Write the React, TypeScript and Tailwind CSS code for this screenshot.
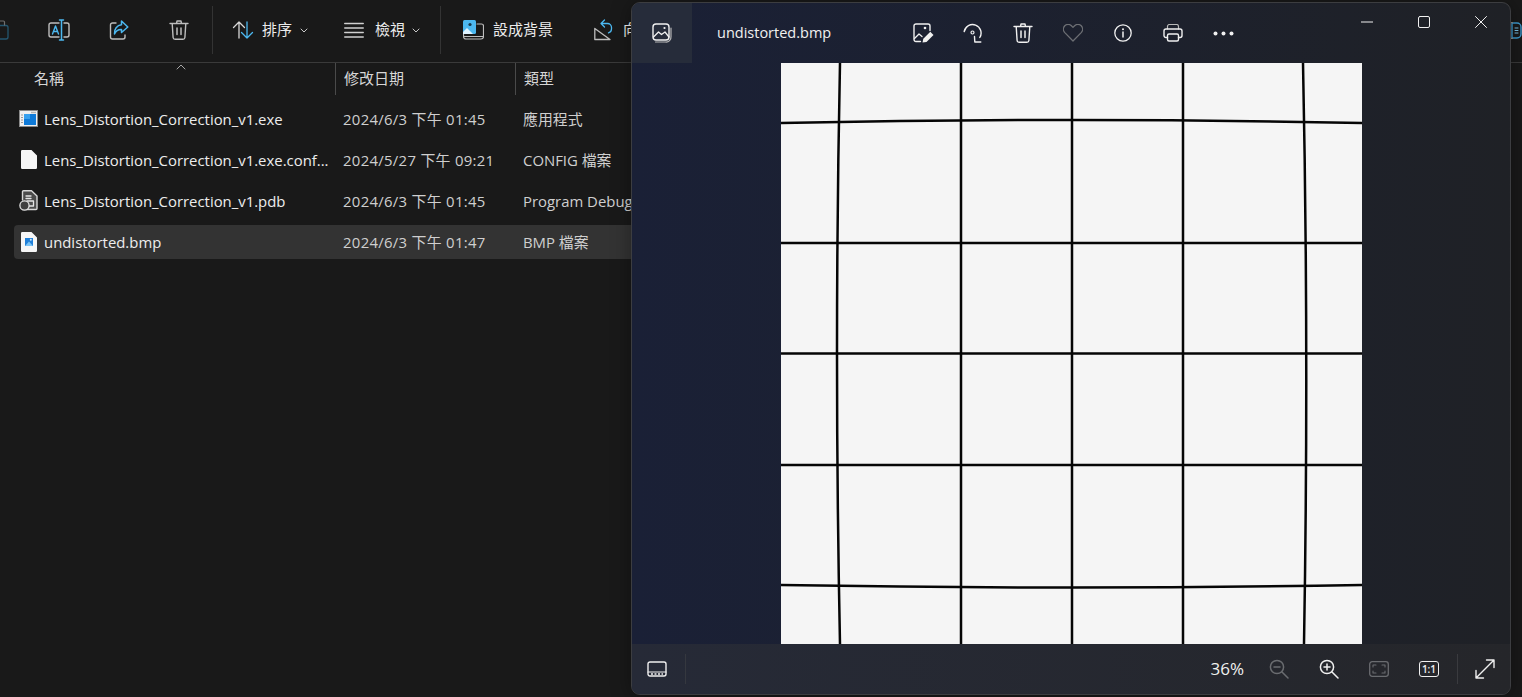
import React from "react";

const UI = "font-['Open_Sans','Noto_Sans_CJK_TC',sans-serif]";

function Svg({ w = 20, h = 20, vb = "0 0 20 20", className = "", children }: { w?: number; h?: number; vb?: string; className?: string; children: React.ReactNode }) {
  return (
    <svg width={w} height={h} viewBox={vb} fill="none" strokeLinecap="round" strokeLinejoin="round" className={"shrink-0 " + className}>
      {children}
    </svg>
  );
}

const G = "#bdbdbd";
const B = "#4cb8f0";

const Rename = () => (
  <Svg w={22} h={22} vb="0 0 22 22">
    <path d="M11 4H3a2 2 0 0 0-2 2v10a2 2 0 0 0 2 2h8M16 4h3a2 2 0 0 1 2 2v10a2 2 0 0 1-2 2h-3" stroke={G} strokeWidth="1.4" />
    <path d="M13.5 1.500v19M11.500 1h4M11.500 21h4" stroke={B} strokeWidth="1.5" />
    <path d="M4.500 15 7.500 7l3 8M5.500 12.500h4" stroke={B} strokeWidth="1.4" />
  </Svg>
);
const Share = () => (
  <Svg w={20} h={22} vb="0 0 20 22">
    <path d="M7 4H3.500a2 2 0 0 0-2 2V18a2 2 0 0 0 2 2H14a2 2 0 0 0 2-2v-2" stroke={G} strokeWidth="1.4" />
    <path d="M12.500 2 18.800 8 12.500 13.500V10.400C9 10.200 6.800 12 5.500 15 5 10 8 6.300 12.500 5.800Z" stroke={B} strokeWidth="1.5" />
  </Svg>
);
const Trash = ({ c = G }: { c?: string }) => (
  <Svg w={20} h={22} vb="0 0 20 22">
    <path d="M1 4.500h18M7.500 4.500 8 2h4l.5 2.500M3.200 4.500l.9 14a2 2 0 0 0 2 1.800h7.800a2 2 0 0 0 2-1.800l.9-14" stroke={c} strokeWidth="1.4" />
    <path d="M8 9v6.500M12 9v6.500" stroke={c} strokeWidth="1.5" />
  </Svg>
);
const Sort = () => (
  <Svg w={22} h={20} vb="0 0 22 20">
    <path d="M7 18V2M1.500 7.500 7 2l5.500 5.500" stroke="#d8d8d8" strokeWidth="1.3" />
    <path d="M15 2v16M9.500 12.500 15 18l5.500-5.500" stroke={B} strokeWidth="1.3" />
  </Svg>
);
const ViewIcon = () => (
  <Svg w={20} h={16} vb="0 0 20 16">
    <path d="M.7 1.500h18.600M.7 6h18.600M.7 10.500h18.600M.7 15h18.600" stroke="#d0d0d0" strokeWidth="1.3" />
  </Svg>
);
const Chevron = ({ c = "#c8c8c8" }: { c?: string }) => (
  <Svg w={8} h={5} vb="0 0 8 5">
    <path d="M1 1l3 3 3-3" stroke={c} strokeWidth="1" />
  </Svg>
);
const Wallpaper = () => (
  <Svg w={21} h={20} vb="0 0 21 20">
    <path d="M14 4h4.500a2 2 0 0 1 2 2v10.500a2.500 2.500 0 0 1-2.500 2.500H3a2.500 2.500 0 0 1-2.500-2.500V14" stroke={G} strokeWidth="1.2" />
    <path d="M1 16.500h19" stroke={G} strokeWidth="1.2" />
    <rect x="0" y="0" width="13" height="14" rx="1.500" fill={B} />
    <circle cx="7" cy="4.500" r="1.600" fill="#16384d" />
    <path d="M0 12 4 8l4 4 2 2H0Z" fill="#dff3ff" />
  </Svg>
);
const RotateIcon = () => (
  <Svg w={19} h={22} vb="0 0 19 22">
    <path d="M.8 20.500 16 20.500 .8 9.500Z" stroke={G} strokeWidth="1.3" />
    <path d="M10.500 1 7 4.500 10.500 8M7 4.500h6.500a4 4 0 0 1 4 4v1.500a4 4 0 0 1-3 3.800" stroke={B} strokeWidth="1.3" />
  </Svg>
);
const Clip = () => (
  <Svg w={9} h={20} vb="0 0 9 20">
    <path d="M0 5.500h6a2 2 0 0 1 2 2V17a2 2 0 0 1-2 2H0" stroke="#24566f" strokeWidth="1.3" />
    <path d="M0 1h3.500a1 1 0 0 1 1 1v3" stroke="#6f6f6f" strokeWidth="1.2" />
  </Svg>
);
const EdgeIcon = () => (
  <Svg w={11} h={17} vb="0 0 11 17">
    <path d="M1 1h5a4 4 0 0 1 4 4v7a4 4 0 0 1-4 4H1Z" stroke="#3d9bd0" strokeWidth="1.4" />
    <path d="M0 .7h1.500M0 16.300h1.500" stroke="#8a8a8a" strokeWidth="1.200" />
    <path d="M4 6h3M4 8.500h3M4 11h3" stroke="#7cc4ea" strokeWidth="1" />
  </Svg>
);

const ExeFile = () => (
  <Svg w={19} h={17} vb="0 0 19 17">
    <rect x="0" y="0" width="19" height="17" fill="#8a8a8a" />
    <rect x="1" y="1" width="17" height="15" fill="#f0f0f0" />
    <path d="M12.500 2.500h4.500" stroke="#777" strokeWidth="1.400" strokeDasharray="1 1" strokeLinecap="butt" />
    <path d="M2 5h2M2 7.500h2M2 10h2M2 12.500h2" stroke="#9a9a9a" strokeWidth="1" strokeLinecap="butt" />
    <rect x="5" y="4" width="12" height="11" fill="#0f7ad8" />
    <rect x="5" y="4" width="6" height="5" fill="#37a0ee" />
  </Svg>
);
const PageFile = () => (
  <Svg w={16} h={19} vb="0 0 16 19">
    <path d="M1.200 0H10.500L16 5.500V17.800A1.200 1.200 0 0 1 14.800 19H1.200A1.200 1.200 0 0 1 0 17.800V1.200A1.200 1.200 0 0 1 1.200 0Z" fill="#f6f6f6" />
  </Svg>
);
const PdbFile = () => (
  <Svg w={19} h={21} vb="0 0 19 21">
    <path d="M3.500 10V1.800A1 1 0 0 1 4.500.8h8L18 6v12.500a1 1 0 0 1-1 1H8" fill="#4c4c4c" stroke="#d8d8d8" strokeWidth="1.400" />
    <path d="M7 6h5M7 8.500h5M8 11h6.500v5H10" stroke="#e4e4e4" strokeWidth="1.300" />
    <circle cx="5.500" cy="15.500" r="4.600" fill="#3f3f3f" stroke="#e2e2e2" strokeWidth="1.300" />
  </Svg>
);
const BmpFile = () => (
  <Svg w={16} h={20} vb="0 0 16 20">
    <path d="M1.200 0H10.500L16 5.500V18.800A1.200 1.200 0 0 1 14.800 20H1.200A1.200 1.200 0 0 1 0 18.800V1.200A1.200 1.200 0 0 1 1.200 0Z" fill="#f6f6f6" />
    <rect x="4" y="6" width="8" height="8" fill="#1f7fd8" />
    <path d="M4 14 8 9.500 12 14Z" fill="#7cc4f5" />
    <circle cx="9.800" cy="7.800" r="1" fill="#cfe9fb" />
  </Svg>
);

const files = [
  { icon: <ExeFile />, name: "Lens_Distortion_Correction_v1.exe", date: "2024/6/3 下午 01:45", type: "應用程式" },
  { icon: <PageFile />, name: "Lens_Distortion_Correction_v1.exe.conf...", date: "2024/5/27 下午 09:21", type: "CONFIG 檔案" },
  { icon: <PdbFile />, name: "Lens_Distortion_Correction_v1.pdb", date: "2024/6/3 下午 01:45", type: "Program Debug Database" },
  { icon: <BmpFile />, name: "undistorted.bmp", date: "2024/6/3 下午 01:47", type: "BMP 檔案", selected: true },
];

function Explorer() {
  return (
    <div className="flex h-full flex-col">
      <div className="flex h-[62px] shrink-0 items-center overflow-hidden pb-[2px]">
        <div className="w-[8px] shrink-0"><Clip /></div>
        <div className="ml-[40px] w-[22px]"><Rename /></div>
        <div className="ml-[39px] w-[20px]"><Share /></div>
        <div className="ml-[40px] w-[20px]"><Trash /></div>
        <div className="ml-[23px] h-[48px] w-px bg-[#333333]" />
        <div className="ml-[19px] flex items-center">
          <Sort />
          <span className="ml-[8px] w-[31px] whitespace-nowrap pb-[2px] text-[15px] text-[#ececec]">排序</span>
          <span className="ml-[7px]"><Chevron /></span>
        </div>
        <div className="ml-[36px] flex items-center">
          <ViewIcon />
          <span className="ml-[11px] w-[30px] whitespace-nowrap pb-[2px] text-[15px] text-[#ececec]">檢視</span>
          <span className="ml-[7px]"><Chevron /></span>
        </div>
        <div className="ml-[20px] h-[48px] w-px bg-[#333333]" />
        <div className="ml-[22px] flex items-center">
          <Wallpaper />
          <span className="ml-[9px] w-[62px] whitespace-nowrap pb-[2px] text-[15px] text-[#ececec]">設成背景</span>
        </div>
        <div className="ml-[39px] flex items-center">
          <RotateIcon />
          <span className="ml-[10px] whitespace-nowrap pb-[2px] text-[15px] text-[#ececec]">向左旋轉</span>
        </div>
        <div className="ml-auto w-[11px] shrink-0"><EdgeIcon /></div>
      </div>
      <div className="relative flex h-[33px] shrink-0 border-t border-[#3a3a3a] text-[15px] text-[#d6d6d6]">
        <div className="flex w-[335px] items-center pb-[2px] pl-[34px]">名稱</div>
        <span className="absolute left-[176px] top-[1px]">
          <Svg w={10} h={6} vb="0 0 10 6"><path d="M1 5l4-4 4 4" stroke="#a8a8a8" strokeWidth="1" /></Svg>
        </span>
        <div className="flex w-[180px] items-center border-l border-[#4a4a4a] pb-[2px] pl-[8px]">修改日期</div>
        <div className="flex flex-1 items-center border-l border-[#4a4a4a] pb-[2px] pl-[8px]">類型</div>
      </div>
      <div className="flex flex-col gap-[7px] pt-[7px]">
        {files.map((f) => (
          <div key={f.name} className={"ml-[14px] flex h-[34px] w-[630px] items-center rounded-[4px] text-[14.9px] " + (f.selected ? "bg-[#333333]" : "")}>
            <div className="flex w-[321px] shrink-0 items-center">
              <div className="flex w-[30px] shrink-0 justify-center pr-[1px]">{f.icon}</div>
              <span className="whitespace-nowrap text-[#ededed]">{f.name}</span>
            </div>
            <div className="w-[180px] shrink-0 whitespace-nowrap pl-[8px] tracking-[0.3px] text-[#cfcfcf]">{f.date}</div>
            <div className="whitespace-nowrap pl-[8px] text-[#cfcfcf]">{f.type}</div>
          </div>
        ))}
      </div>
    </div>
  );
}

const I = "#f0f0f0";
const PhotoThumb = () => (
  <Svg w={20} h={20} vb="0 0 20 20">
    <rect x="1" y="1" width="16" height="16" rx="3" stroke={I} strokeWidth="1.400" />
    <path d="M1.500 14 6.500 9l3 2.500L13 9l4 5" stroke={I} strokeWidth="1.300" />
    <circle cx="12.500" cy="5" r="1.100" fill={I} />
    <path d="M3.500 19h10a5 5 0 0 0 5.500-5.500V5" stroke="#b8b8b8" strokeWidth="1.200" />
  </Svg>
);
const EditImg = () => (
  <Svg w={21} h={20} vb="0 0 21 20">
    <path d="M7.500 18.500H3a2 2 0 0 1-2-2V3a2 2 0 0 1 2-2h12a2 2 0 0 1 2 2v4.500" stroke={I} strokeWidth="1.400" />
    <path d="M1.500 15.500 6 11l3 2.500" stroke={I} strokeWidth="1.300" />
    <circle cx="12" cy="5" r="1.300" fill={I} />
    <path d="M9.500 19.500l.8-3.800 7-7 3.200 3.200-7 7Z" fill={I} />
  </Svg>
);
const Rotate = () => (
  <Svg w={20} h={20} vb="0 0 20 20">
    <path d="M1.200 8.500A8.500 8.500 0 1 1 16.800 14.500" stroke={I} strokeWidth="1.400" />
    <circle cx="9.500" cy="9.500" r="1.500" stroke={I} strokeWidth="1.200" />
    <path d="M11.500 13.500l.3 5.500h6" stroke={I} strokeWidth="1.400" />
  </Svg>
);
const Heart = () => (
  <Svg w={20} h={18} vb="0 0 20 18">
    <path d="M10 17 1.800 8.600a5 5 0 0 1 0-6.800 4.600 4.600 0 0 1 6.600 0L10 3.400l1.600-1.600a4.600 4.600 0 0 1 6.600 0 5 5 0 0 1 0 6.800Z" stroke="#6c6e73" strokeWidth="1.300" />
  </Svg>
);
const Info = () => (
  <Svg w={18} h={18} vb="0 0 18 18">
    <circle cx="9" cy="9" r="8.200" stroke={I} strokeWidth="1.300" />
    <path d="M9 8v5" stroke={I} strokeWidth="1.500" />
    <circle cx="9" cy="5.200" r="1" fill={I} />
  </Svg>
);
const Printer = () => (
  <Svg w={20} h={18} vb="0 0 20 18">
    <path d="M4.500 5V2.500a2 2 0 0 1 2-2h7a2 2 0 0 1 2 2V5" stroke="#b8b8b8" strokeWidth="1.200" />
    <path d="M4.500 13.500H3A2 2 0 0 1 1 11.500V7a2 2 0 0 1 2-2h14a2 2 0 0 1 2 2v4.500a2 2 0 0 1-2 2h-1.500" stroke={I} strokeWidth="1.400" />
    <rect x="4.500" y="10" width="11" height="7" rx="1.500" stroke={I} strokeWidth="1.400" />
  </Svg>
);
const More = () => (
  <Svg w={21} h={5} vb="0 0 21 5">
    <circle cx="2.500" cy="2.500" r="2" fill={I} />
    <circle cx="10.500" cy="2.500" r="2" fill={I} />
    <circle cx="18.500" cy="2.500" r="2" fill={I} />
  </Svg>
);
const Film = () => (
  <Svg w={20} h={16} vb="0 0 20 16">
    <path d="M1 3a2 2 0 0 1 2-2h14a2 2 0 0 1 2 2v10a2 2 0 0 1-2 2H3a2 2 0 0 1-2-2Z" stroke={I} strokeWidth="1.400" />
    <path d="M1 11h18" stroke={I} strokeWidth="1.200" />
    <path d="M4 13h12" stroke={I} strokeWidth="1.600" strokeDasharray="2 1.500" strokeLinecap="butt" />
  </Svg>
);
const Zoom = ({ c, plus }: { c: string; plus?: boolean }) => (
  <Svg w={20} h={20} vb="0 0 20 20">
    <circle cx="8" cy="8" r="6.600" stroke={c} strokeWidth="1.500" />
    <path d="M13 13l6 6M5 8h6" stroke={c} strokeWidth="1.500" />
    {plus && <path d="M8 5v6" stroke={c} strokeWidth="1.500" />}
  </Svg>
);
const Fit = () => (
  <Svg w={20} h={16} vb="0 0 20 16">
    <rect x=".7" y=".7" width="18.600" height="14.600" rx="2.500" stroke="#6a6c70" strokeWidth="1.300" />
    <path d="M4 6V4h3M13 4h3v2M4 10v2h3M13 12h3v-2" stroke="#6a6c70" strokeWidth="1.100" />
  </Svg>
);
const OneOne = () => (
  <div className="flex h-[16px] w-[20px] items-center justify-center rounded-[3px] border-[1.5px] border-[#f0f0f0] text-[10px] font-semibold leading-none text-[#f0f0f0]">1:1</div>
);
const Expand = () => (
  <Svg w={20} h={20} vb="0 0 20 20">
    <path d="M1 19 19 1M11.500 1H19v7.500M1 11.500V19h7.500" stroke={I} strokeWidth="1.400" />
  </Svg>
);

function GridPicture() {
  const v = [
    "M59 0 Q53 290 59 581",
    "M180 0 Q179.500 290 180 581",
    "M291 0V581",
    "M402 0 Q402.500 290 402 581",
    "M522 0 Q528 290 523 581",
  ];
  const h = [
    "M0 60 Q290 54 581 60",
    "M0 180 Q290 179 581 180",
    "M0 290.500H581",
    "M0 402 Q290 401 581 402",
    "M0 522 Q290 527 581 522",
  ];
  return (
    <svg width={581} height={581} viewBox="0 0 581 581" className="block shrink-0 bg-[#f5f5f5]">
      {[...v, ...h].map((d) => (
        <path key={d} d={d} fill="none" stroke="#050505" strokeWidth="2.500" />
      ))}
    </svg>
  );
}

function IconBtn({ children }: { children: React.ReactNode }) {
  return <div className="flex h-[40px] w-[50px] items-center justify-center">{children}</div>;
}

function PhotoWindow() {
  return (
    <div className="absolute left-[631px] top-[2px] flex h-[693px] w-[880px] flex-col overflow-hidden rounded-[9px] border border-[#3c3d40] bg-gradient-to-r from-[#1a2036] to-[#1f2126] shadow-[0_2px_20px_rgba(0,0,0,0.35)]">
      <div className="flex h-[60px] shrink-0 items-center">
        <div className="flex h-[60px] w-[60px] items-center justify-center bg-[#262c3a]"><PhotoThumb /></div>
        <div className="ml-[25px] w-[181px] text-[14.5px] text-[#f0f0f0]">undistorted.bmp</div>
        <div className="flex items-center">
          <IconBtn><EditImg /></IconBtn>
          <IconBtn><Rotate /></IconBtn>
          <IconBtn><Trash c={I} /></IconBtn>
          <IconBtn><Heart /></IconBtn>
          <IconBtn><Info /></IconBtn>
          <IconBtn><Printer /></IconBtn>
          <IconBtn><More /></IconBtn>
        </div>
        <div className="ml-auto flex h-[40px] -translate-y-[11px] items-center pr-[1px]">
          <div className="flex w-[57px] justify-center"><Svg w={12} h={2} vb="0 0 12 2"><path d="M0 1h12" stroke={I} strokeWidth="1" strokeLinecap="butt" /></Svg></div>
          <div className="flex w-[57px] justify-center"><Svg w={12} h={12} vb="0 0 12 12"><rect x=".5" y=".5" width="11" height="11" rx="1.500" stroke={I} strokeWidth="1" /></Svg></div>
          <div className="flex w-[57px] justify-center"><Svg w={12} h={12} vb="0 0 12 12"><path d="M.5.5l11 11M11.500.5l-11 11" stroke={I} strokeWidth="1" /></Svg></div>
        </div>
      </div>
      <div className="flex min-h-0 flex-1 justify-center">
        <GridPicture />
      </div>
      <div className="flex h-[50px] shrink-0 items-center bg-gradient-to-r from-[#262a37] to-[#25262a]">
        <div className="flex w-[50px] justify-center"><Film /></div>
        <div className="ml-[3px] h-[30px] w-px bg-[#35383f]" />
        <div className="ml-auto whitespace-nowrap text-[17px] text-[#f0f0f0]">36%</div>
        <div className="ml-[10px] flex items-center">
          <IconBtn><Zoom c="#6a6c70" /></IconBtn>
          <IconBtn><Zoom c={I} plus /></IconBtn>
          <IconBtn><Fit /></IconBtn>
          <IconBtn><OneOne /></IconBtn>
        </div>
        <div className="ml-[3px] h-[30px] w-px bg-[#3a3b3f]" />
        <div className="flex w-[52px] justify-center pl-[2px]"><Expand /></div>
      </div>
    </div>
  );
}

export default function App() {
  return (
    <div className={"relative h-[697px] w-[1522px] overflow-hidden bg-[#191919] " + UI}>
      <Explorer />
      <PhotoWindow />
    </div>
  );
}
